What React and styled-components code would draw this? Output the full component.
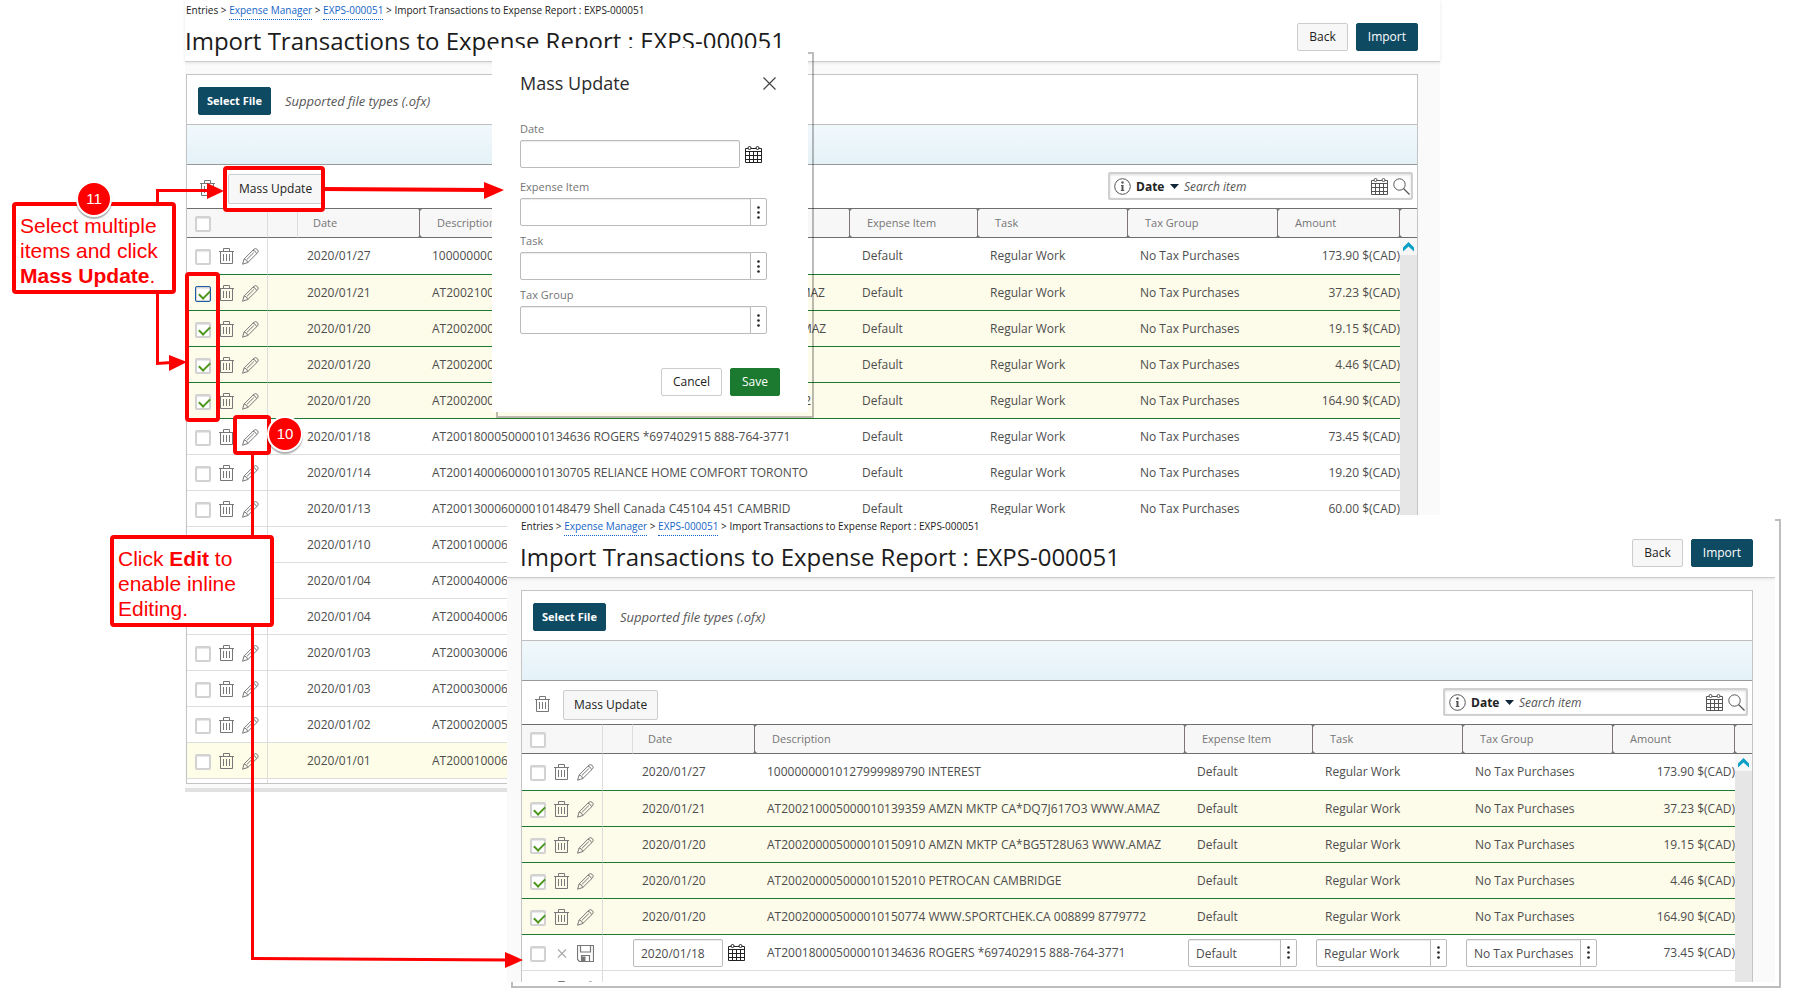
import { useId } from "react";
import styled, { createGlobalStyle, css } from "styled-components";

const GlobalStyle = createGlobalStyle`
*{
    box-sizing:border-box;
}
body{
    margin:0;
    background:#fff;
    font-family:"Open Sans", "Noto Sans", sans-serif;
    font-size:12px;
    color:#4d4d4d;
}
button, input, select{
    font-family:inherit;
    font-size:12px;
}
`;

const Stage = styled.main`
position:relative;
min-height:100vh;
overflow:hidden;
`;

// A window floating on the stage, with a hard offset outline behind it
const Floating = styled.div`
position:absolute;
top:${p => p.$top}px;
left:${p => p.$left}px;
${p => p.$right !== undefined && css`right:${p.$right}px;`}
${p => p.$framed && css`
    &::before{
        content:"";
        position:absolute;
        inset:4px -6px -6px 4px;
        border:2px solid rgba(0, 0, 0, 0.26);
    }
`}
`;

const Screen = styled.section`
position:relative;
background:#fafafa;
${p => p.$height && css`
    height:${p.$height}px;
    overflow:hidden;
`}
${p => p.$footer && css`
    padding-bottom:4px;
    border-bottom:4px solid #e1e1e1;
`}
`;

const ScreenHeader = styled.header`
display:flex;
justify-content:space-between;
height:${p => p.$top + 62}px;
padding:${p => p.$top}px 22px 0 ${p => p.$gutter - 1}px;
background:#fff;
border-bottom:1px solid #ccc;
box-shadow:0 1px 3px rgba(0, 0, 0, 0.1);
`;

const Breadcrumb = styled.nav`
height:20px;
padding:3px 0 0 1px;
font-size:10px;
line-height:14px;
color:#1a1a1a;
`;

const CrumbLink = styled.a`
padding-bottom:2px;
color:#1565c8;
text-decoration:none;
border-bottom:1px dotted #1565c8;
`;

const Title = styled.h1`
margin:4px 0 0;
font-size:24px;
line-height:34px;
font-weight:400;
color:#1c1c1c;
white-space:nowrap;
`;

const HeaderActions = styled.div`
display:flex;
gap:8px;
padding-top:23px;
`;

const looks = {
    plain: css`
    background:#f7f7f7;
    border-color:#ccc;
    color:#222;
    `,
    white: css`
    background:#fff;
    border-color:#ccc;
    color:#222;
    `,
    dark: css`
    background:#0f4a63;
    border-color:#0f4a63;
    color:#fff;
    `,
    green: css`
    background:#1b7a30;
    border-color:#1b7a30;
    color:#fff;
    `,
};

const Button = styled.button`
height:28px;
padding:0 11px;
border:1px solid;
border-radius:2px;
line-height:16px;
font-weight:400;
white-space:nowrap;
${p => looks[p.$look]}
${p => p.$tall && css`
    height:30px;
    padding:0 10px;
`}
${p => p.$bold && css`
    padding:0 8px;
    font-size:11px;
    font-weight:700;
`}
`;

const IconButton = styled.button`
display:flex;
padding:0;
border:0;
background:none;
color:${p => p.$color || "#777"};
`;

const Panel = styled.div`
margin:12px 22px 0 ${p => p.$gutter}px;
background:#fff;
border:1px solid #c4c4c4;
`;

const FileRow = styled.div`
display:flex;
align-items:center;
gap:14px;
height:49px;
padding:3px 11px 0;
`;

const Hint = styled.span`
font-size:13px;
font-style:italic;
line-height:16px;
color:#555;
`;

const Band = styled.div`
height:41px;
border-top:1px solid #bfbfbf;
border-bottom:1px solid #999;
background:linear-gradient(#f1f8fc, #e4f2f8);
`;

const Toolbar = styled.div`
display:flex;
align-items:center;
gap:13px;
height:43px;
padding:4px 4px 0 13px;
`;

const SearchBox = styled.div`
display:flex;
align-items:center;
gap:5px;
width:305px;
height:28px;
margin:-5px 0 0 auto;
padding:0 1px 0 4px;
border:2px solid #d0d0d0;
border-radius:2px;
box-shadow:inset 0 1px 3px rgba(0, 0, 0, 0.15);
color:#555;
`;

const SearchKind = styled.select`
appearance:none;
padding:0;
border:0;
background:none;
font-weight:700;
color:#222;
`;

const SearchInput = styled.input`
flex:1;
min-width:0;
padding:0;
border:0;
background:none;
&::placeholder{
    font-style:italic;
    color:#555;
}
`;

const Table = styled.table`
width:100%;
table-layout:fixed;
border-collapse:separate;
border-spacing:0;
`;

const HeadCell = styled.th`
position:relative;
height:30px;
padding:0 0 0 ${p => p.$pad || 17}px;
border-top:1px solid #6f6f6f;
border-bottom:1px solid #6f6f6f;
background:#f7f7f7;
font-size:11px;
line-height:16px;
font-weight:400;
text-align:left;
color:#757575;
${p => p.$line && css`border-right:1px solid #ddd;`}
${p => p.$grip && css`
    border-right:1px solid #7d7478;
    &::before, &::after{
        content:"";
        position:absolute;
        right:-3px;
        border:2px solid transparent;
        z-index:1;
    }
    &::before{
        top:0;
        border-top-color:#777;
        border-bottom:0;
    }
    &::after{
        bottom:0;
        border-bottom-color:#777;
        border-top:0;
    }
`}
`;

const rowTones = {
    selected: "#fdfbe9",
    hover: "#fefee8",
};

const Row = styled.tr`
background:${p => rowTones[p.$tone] || "#fff"};
&:first-child > td{
    height:37px;
}
`;

const Cell = styled.td`
height:36px;
padding:0 0 0 ${p => p.$pad ?? 12}px;
border-bottom:1px solid ${p => (p.$green ? "#1b7a30" : "#ddd")};
line-height:16px;
text-align:${p => (p.$right ? "right" : "left")};
white-space:nowrap;
overflow:hidden;
${p => p.$line && css`border-right:1px solid #ddd;`}
`;

const SpacerCell = styled.td`
height:4px;
padding:0;
${p => p.$line && css`border-right:1px solid #ddd;`}
`;

const ScrollTrack = styled.td`
padding:0;
vertical-align:top;
background:#e6e6e6;
`;

const ScrollButton = styled.button`
display:block;
width:17px;
height:17px;
padding:0;
border:0;
background:#f7f7f7;
`;

const CheckBox = styled.input`
appearance:none;
flex:none;
display:block;
position:relative;
width:16px;
height:16px;
margin:0;
border:2px solid #d2d2d2;
border-radius:2px;
background:#fff;
box-shadow:inset 0 1px 1px rgba(0, 0, 0, 0.1);
${p => p.$focused && css`
    outline:1px solid #1c5ea6;
    outline-offset:-1px;
`}
&:checked::after{
    content:"";
    position:absolute;
    left:4px;
    top:0;
    width:5px;
    height:9px;
    border:solid #4c961c;
    border-width:0 2px 2px 0;
    transform:rotate(45deg);
}
`;

const RowTools = styled.div`
display:flex;
align-items:flex-start;
gap:8px;
padding-top:1px;
${CheckBox}{
    margin-top:1px;
}
`;

const TextInput = styled.input`
flex:${p => (p.$width ? "none" : 1)};
width:${p => (p.$width ? `${p.$width}px` : "auto")};
min-width:0;
height:28px;
padding:2px 7px 0;
border:1px solid #bbb;
border-radius:2px;
background:#fff;
color:#4d4d4d;
box-shadow:inset 0 1px 1px rgba(0, 0, 0, 0.08);
`;

const LookupRow = styled.div`
display:flex;
width:${p => (p.$width ? `${p.$width}px` : "auto")};
${TextInput}{
    border-radius:2px 0 0 2px;
}
`;

const LookupButton = styled.button`
flex:none;
display:grid;
place-items:center;
width:17px;
height:28px;
margin-left:-1px;
padding:0;
border:1px solid #bbb;
border-radius:0 2px 2px 0;
background:#fff;
color:#222;
`;

const DateRow = styled.div`
display:flex;
align-items:center;
gap:5px;
`;

const Dialog = styled.section`
position:relative;
width:316px;
height:364px;
padding:23px 28px 0;
background:#fff;
`;

const DialogHeader = styled.header`
display:flex;
justify-content:space-between;
align-items:center;
margin-bottom:27px;
padding-right:4px;
`;

const DialogTitle = styled.h2`
margin:0;
font-size:18px;
line-height:24px;
font-weight:400;
color:#2b2b2b;
`;

const Field = styled.div`
width:247px;
margin-bottom:${p => p.$gap || 8}px;
`;

const Label = styled.label`
display:block;
height:18px;
font-size:11px;
line-height:14px;
color:#757575;
`;

const DialogActions = styled.footer`
display:flex;
justify-content:flex-end;
gap:8px;
padding-top:26px;
`;

const Arrows = styled.svg`
position:absolute;
top:0;
left:0;
pointer-events:none;
`;

const Outline = styled.div`
position:absolute;
left:${p => p.$x}px;
top:${p => p.$y}px;
width:${p => p.$w}px;
height:${p => p.$h}px;
border:4px solid #fe0000;
border-radius:4px;
pointer-events:none;
`;

const Callout = styled.p`
position:absolute;
left:${p => p.$x}px;
top:${p => p.$y}px;
width:164px;
height:92px;
margin:0;
padding:7px 4px 0;
border:4px solid #fe0000;
border-radius:4px;
background:#fff;
font:21px/25px "Liberation Sans", Arial, sans-serif;
color:#fe0000;
`;

const Badge = styled.span`
position:absolute;
left:${p => p.$x}px;
top:${p => p.$y}px;
display:grid;
place-items:center;
width:36px;
height:36px;
border:2px solid #fff;
border-radius:50%;
background:#fe0000;
box-shadow:0 2px 1px rgba(0, 0, 0, 0.3);
font:15px/16px "Liberation Sans", Arial, sans-serif;
color:#fff;
`;

const TrashIcon = () => (
    <svg width="15" height="17" viewBox="0 0 15 17" fill="none" stroke="currentColor" aria-hidden="true">
        <path d="M0 3.5h15M4.5 3V.5h6V3M1.500 4v11.500h12V4M4.500 6v7M7.500 6v7M10.500 6v7" />
    </svg>
);

const PencilIcon = () => (
    <svg width="17" height="17" viewBox="0 0 17 17" fill="none" stroke="currentColor" aria-hidden="true">
        <path d="M.6 16.2l1.500-5.200L12 1.200q1.500-1.300 3.300.3t.3 3.300L5.800 14.500zM2.100 11q3 .4 3.700 3.500M11 2.200q2.700.6 3.600 3.500M5 11.300l6.800-6.700" />
    </svg>
);

const CalendarIcon = () => (
    <svg width="17" height="17" viewBox="0 0 17 17" fill="none" stroke="currentColor" aria-hidden="true">
        <path d="M.5 2.5v14h16v-14M0 5.500h17M0 9.500h17M0 13.500h17M4.500 6v10M8.500 6v10M12.500 6v10M.5 2.500h2.500M6 2.500h5M14 2.500h2.500" />
        <circle cx="4.500" cy="2" r="1.500" />
        <circle cx="12.500" cy="2" r="1.500" />
    </svg>
);

const InfoIcon = () => (
    <svg width="17" height="17" viewBox="0 0 17 17" fill="none" stroke="currentColor" aria-hidden="true">
        <circle cx="8.500" cy="8.500" r="7.800" />
        <path d="M8.500 7v5.500" strokeWidth="2" />
        <path d="M7 7.500h2M6.800 12.500h3.500" />
        <circle cx="8.500" cy="4.500" r="1.200" fill="currentColor" stroke="none" />
    </svg>
);

const SearchIcon = () => (
    <svg width="17" height="17" viewBox="0 0 17 17" fill="none" stroke="currentColor" aria-hidden="true">
        <circle cx="6.500" cy="6.500" r="5.700" />
        <path d="M10.500 10.500l6 6" strokeWidth="1.300" />
    </svg>
);

const CaretIcon = () => (
    <svg width="9" height="5" viewBox="0 0 9 5" aria-hidden="true">
        <path d="M0 0h9L4.500 5z" fill="#12263a" />
    </svg>
);

const CloseIcon = () => (
    <svg width="13" height="13" viewBox="0 0 13 13" stroke="currentColor" strokeWidth="1.200" aria-hidden="true">
        <path d="M.5.5l12 12M12.500.5l-12 12" />
    </svg>
);

const CancelIcon = () => (
    <svg width="15" height="17" viewBox="0 0 15 17" stroke="currentColor" strokeWidth="1.200" aria-hidden="true">
        <path d="M4 4.500l8 8M12 4.500l-8 8" />
    </svg>
);

const SaveIcon = () => (
    <svg width="17" height="17" viewBox="0 0 17 17" fill="none" stroke="currentColor" aria-hidden="true">
        <path d="M.5.5h16v16H2.500l-2-2zM3.500.5v6.500h10V.5M4.500 16v-5.500h8V16" strokeWidth="1.200" />
        <path d="M5 11.500h3.500v5H5z" fill="currentColor" stroke="none" />
    </svg>
);

const DotsIcon = () => (
    <svg width="3" height="13" viewBox="0 0 3 13" fill="currentColor" aria-hidden="true">
        <circle cx="1.500" cy="1.500" r="1.300" />
        <circle cx="1.500" cy="6.500" r="1.300" />
        <circle cx="1.500" cy="11.500" r="1.300" />
    </svg>
);

const UpIcon = () => (
    <svg width="17" height="17" viewBox="0 0 17 17" aria-hidden="true">
        <path d="M8.500 4L14 9.500v4L8.500 8.500 3 13.500v-4z" fill="#0a9fc4" />
    </svg>
);

const transactions = [
    { date: "2020/01/27", text: "10000000010127999989790 INTEREST", amount: "173.90", green: true },
    { date: "2020/01/21", text: "AT200210005000010139359 AMZN MKTP CA*DQ7J617O3 WWW.AMAZ", amount: "37.23", selected: true },
    { date: "2020/01/20", text: "AT200200005000010150910 AMZN MKTP CA*BG5T28U63 WWW.AMAZ", amount: "19.15", selected: true },
    { date: "2020/01/20", text: "AT200200005000010152010 PETROCAN CAMBRIDGE", amount: "4.46", selected: true },
    { date: "2020/01/20", text: "AT200200005000010150774 WWW.SPORTCHEK.CA 008899 8779772", amount: "164.90", selected: true },
    { date: "2020/01/18", text: "AT200180005000010134636 ROGERS *697402915 888-764-3771", amount: "73.45" },
    { date: "2020/01/14", text: "AT200140006000010130705 RELIANCE HOME COMFORT TORONTO", amount: "19.20" },
    { date: "2020/01/13", text: "AT200130006000010148479 Shell Canada C45104 451 CAMBRID", amount: "60.00" },
    { date: "2020/01/10", text: "AT200100006" },
    { date: "2020/01/04", text: "AT200040006" },
    { date: "2020/01/04", text: "AT200040006" },
    { date: "2020/01/03", text: "AT200030006" },
    { date: "2020/01/03", text: "AT200030006" },
    { date: "2020/01/02", text: "AT200020005" },
    { date: "2020/01/01", text: "AT200010006", tone: "hover" },
];

const Lookup = ({ width, ...rest }) => (
    <LookupRow $width={width}>
        <TextInput type="text" {...rest} />
        <LookupButton type="button" aria-label="Choose"><DotsIcon /></LookupButton>
    </LookupRow>
);

const TransactionRow = ({ item, editing, focused, track }) => {
    const green = item.green || item.selected;
    return (
        <Row $tone={item.selected ? "selected" : item.tone}>
            <Cell $pad={8} $line $green={green}>
                <RowTools>
                    <CheckBox type="checkbox" defaultChecked={item.selected} $focused={focused} aria-label={`Select ${item.date}`} />
                    {editing ? (
                        <>
                            <IconButton type="button" $color="#aaa" aria-label="Cancel editing"><CancelIcon /></IconButton>
                            <IconButton type="button" aria-label="Save row"><SaveIcon /></IconButton>
                        </>
                    ) : (
                        <>
                            <IconButton type="button" aria-label="Delete"><TrashIcon /></IconButton>
                            <IconButton type="button" aria-label="Edit"><PencilIcon /></IconButton>
                        </>
                    )}
                </RowTools>
            </Cell>
            <Cell $green={green} />
            {editing ? (
                <Cell $pad={0}>
                    <DateRow>
                        <TextInput type="text" $width={90} defaultValue={item.date} aria-label="Date" />
                        <IconButton type="button" $color="#222" aria-label="Pick a date"><CalendarIcon /></IconButton>
                    </DateRow>
                </Cell>
            ) : (
                <Cell $pad={9} $green={green}>{item.date}</Cell>
            )}
            <Cell $green={green}>{item.text}</Cell>
            {editing ? (
                <>
                    <Cell $pad={3}><Lookup width={109} defaultValue="Default" aria-label="Expense Item" /></Cell>
                    <Cell $pad={3}><Lookup width={131} defaultValue="Regular Work" aria-label="Task" /></Cell>
                    <Cell $pad={3}><Lookup width={131} defaultValue="No Tax Purchases" aria-label="Tax Group" /></Cell>
                </>
            ) : (
                <>
                    <Cell $green={green}>Default</Cell>
                    <Cell $green={green}>Regular Work</Cell>
                    <Cell $green={green}>No Tax Purchases</Cell>
                </>
            )}
            <Cell $pad={0} $right $green={green}>{item.amount && `${item.amount} $(CAD)`}</Cell>
            {track}
        </Row>
    );
};

const ImportScreen = ({ gutter, top = 0, height, items, editIndex, focusIndex, footer }) => {
    const track = (
        <ScrollTrack rowSpan={items.length + 1}>
            <ScrollButton type="button" aria-label="Scroll up"><UpIcon /></ScrollButton>
        </ScrollTrack>
    );
    return (
        <Screen $height={height} $footer={footer}>
            <ScreenHeader $gutter={gutter} $top={top}>
                <div>
                    <Breadcrumb aria-label="Breadcrumb">
                        Entries &gt; <CrumbLink href="#manager">Expense Manager</CrumbLink>
                        {" > "}
                        <CrumbLink href="#report">EXPS-000051</CrumbLink>
                        {" > "}
                        Import Transactions to Expense Report : EXPS-000051
                    </Breadcrumb>
                    <Title>Import Transactions to Expense Report : EXPS-000051</Title>
                </div>
                <HeaderActions>
                    <Button type="button" $look="plain">Back</Button>
                    <Button type="button" $look="dark">Import</Button>
                </HeaderActions>
            </ScreenHeader>
            <Panel $gutter={gutter}>
                <FileRow>
                    <Button type="button" $look="dark" $bold>Select File</Button>
                    <Hint>Supported file types (.ofx)</Hint>
                </FileRow>
                <Band />
                <Toolbar>
                    <IconButton type="button" aria-label="Delete selected"><TrashIcon /></IconButton>
                    <Button type="button" $look="plain" $tall>Mass Update</Button>
                    <SearchBox>
                        <InfoIcon />
                        <SearchKind aria-label="Search by">
                            <option>Date</option>
                        </SearchKind>
                        <CaretIcon />
                        <SearchInput type="text" placeholder="Search item" aria-label="Search item" />
                        <IconButton type="button" $color="#555" aria-label="Pick a date"><CalendarIcon /></IconButton>
                        <IconButton type="button" $color="#555" aria-label="Search"><SearchIcon /></IconButton>
                    </SearchBox>
                </Toolbar>
                <Table>
                    <colgroup>
                        <col width="81" />
                        <col width="30" />
                        <col width="122" />
                        <col />
                        <col width="128" />
                        <col width="150" />
                        <col width="150" />
                        <col width="122" />
                        <col width="17" />
                    </colgroup>
                    <thead>
                        <tr>
                            <HeadCell $pad={8} $line>
                                <RowTools>
                                    <CheckBox type="checkbox" aria-label="Select all" />
                                </RowTools>
                            </HeadCell>
                            <HeadCell $line />
                            <HeadCell $pad={15} $grip>Date</HeadCell>
                            <HeadCell $grip>Description</HeadCell>
                            <HeadCell $grip>Expense Item</HeadCell>
                            <HeadCell $grip>Task</HeadCell>
                            <HeadCell $grip>Tax Group</HeadCell>
                            <HeadCell $grip>Amount</HeadCell>
                            <HeadCell />
                        </tr>
                    </thead>
                    <tbody>
                        {items.map((item, i) => (
                            <TransactionRow
                                key={i}
                                item={item}
                                editing={i === editIndex}
                                focused={i === focusIndex}
                                track={i === 0 && track}
                            />
                        ))}
                        <tr>
                            <SpacerCell $line />
                            <SpacerCell colSpan={7} />
                        </tr>
                    </tbody>
                </Table>
            </Panel>
        </Screen>
    );
};

const MassUpdateDialog = () => {
    const id = useId();
    return (
        <Dialog role="dialog" aria-labelledby={`${id}-title`}>
            <DialogHeader>
                <DialogTitle id={`${id}-title`}>Mass Update</DialogTitle>
                <IconButton type="button" $color="#444" aria-label="Close"><CloseIcon /></IconButton>
            </DialogHeader>
            <Field $gap={12}>
                <Label htmlFor={`${id}-date`}>Date</Label>
                <DateRow>
                    <TextInput type="text" id={`${id}-date`} $width={220} />
                    <IconButton type="button" $color="#222" aria-label="Pick a date"><CalendarIcon /></IconButton>
                </DateRow>
            </Field>
            {["Expense Item", "Task", "Tax Group"].map(name => (
                <Field key={name}>
                    <Label htmlFor={`${id}-${name}`}>{name}</Label>
                    <Lookup id={`${id}-${name}`} />
                </Field>
            ))}
            <DialogActions>
                <Button type="button" $look="white">Cancel</Button>
                <Button type="button" $look="green">Save</Button>
            </DialogActions>
        </Dialog>
    );
};

export default function App() {
    return (
        <Stage>
            <GlobalStyle />
            {/* Full list, with four rows ticked */}
            <Floating $top={0} $left={185} $right={353}>
                <ImportScreen gutter={1} items={transactions} focusIndex={1} footer />
            </Floating>
            <Floating $top={48} $left={492} $framed>
                <MassUpdateDialog />
            </Floating>
            {/* Same list, with one row in edit mode */}
            <Floating $top={515} $left={507} $right={18} $framed>
                <ImportScreen gutter={14} top={1} height={467} items={transactions.slice(0, 7)} editIndex={5} />
            </Floating>

            <Arrows width="560" height="999" viewBox="0 0 560 999" fill="none" stroke="#fe0000" strokeWidth="3">
                <path d="M157.500 204V190.500H210M157.500 290v73.500l14-1M252.500 452V958.500L508 960" />
                <path d="M322 189l165 1" strokeWidth="4" />
                <path d="M207 183l17 8-17 8zM169 355l18 7-18 9zM484 182l20 8-20 9zM505 952l18 8-18 8z" fill="#fe0000" stroke="none" />
            </Arrows>
            <Outline $x={223} $y={166} $w={102} $h={46} />
            <Outline $x={185} $y={272} $w={35} $h={150} />
            <Outline $x={233} $y={415} $w={38} $h={40} />
            <Callout $x={12} $y={202}>Select multiple items and click <b>Mass Update</b>.</Callout>
            <Callout $x={110} $y={535}>Click <b>Edit</b> to enable inline Editing.</Callout>
            <Badge $x={76} $y={181}>11</Badge>
            <Badge $x={267} $y={416}>10</Badge>
        </Stage>
    );
}
